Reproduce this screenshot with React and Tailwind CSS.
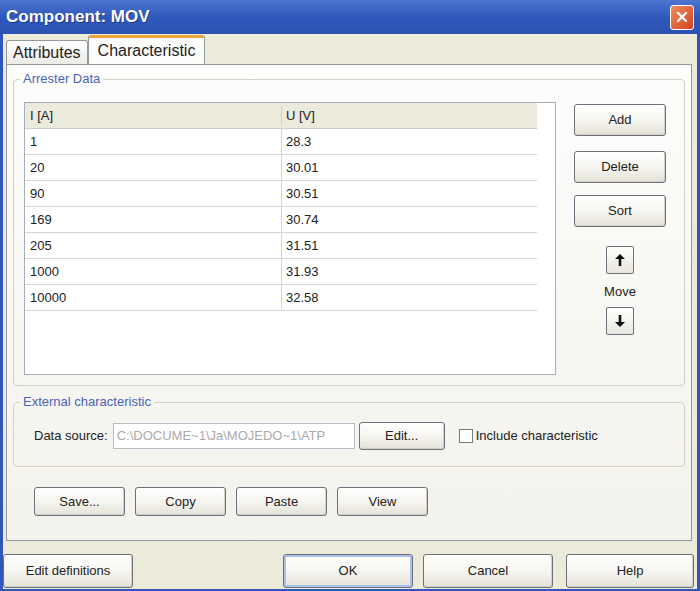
import React from "react";

const rows = [
  ["1", "28.3"],
  ["20", "30.01"],
  ["90", "30.51"],
  ["169", "30.74"],
  ["205", "31.51"],
  ["1000", "31.93"],
  ["10000", "32.58"],
];

function XpButton({ children, className = "", isDefault = false }) {
  return (
    <button
      className={
        "flex items-center justify-center rounded-[3px] border border-[#6b7079] bg-gradient-to-b from-white via-[#f6f5f0] to-[#e4e2d8] text-[13px] text-[#222] " +
        (isDefault ? "shadow-[inset_0_0_0_2px_#a9c1ec] " : "shadow-[inset_-1px_-1px_0_#d3d1c6] ") +
        className
      }
    >
      {children}
    </button>
  );
}

function ArrowButton({ up }) {
  return (
    <button className="flex h-[28px] w-[28px] items-center justify-center rounded-[2px] border border-[#6b7079] bg-gradient-to-b from-white to-[#e8e6dc]">
      <svg width="12" height="14" viewBox="0 0 12 14">
        {up ? (
          <path d="M6 1 L11 6 H7.3 V13 H4.7 V6 H1 Z" fill="#111" />
        ) : (
          <path d="M6 13 L11 8 H7.3 V1 H4.7 V8 H1 Z" fill="#111" />
        )}
      </svg>
    </button>
  );
}

function GroupBox({ label, className = "", legendClass = "", children }) {
  return (
    <fieldset className={"rounded-[4px] border border-[#d3d2c4] " + className}>
      <legend className={"px-[3px] text-[13px] leading-[16px] text-[#4a63b8] " + legendClass}>{label}</legend>
      {children}
    </fieldset>
  );
}

export default function App() {
  return (
    <div className="flex h-[591px] w-[700px] flex-col overflow-hidden bg-[#2f56b8] font-['Liberation_Sans',Arial,sans-serif]">
      {/* title bar */}
      <div className="flex h-[34px] items-center justify-between bg-gradient-to-b from-[#4d75d0] via-[#2f58bd] to-[#2c52b2] pl-[6px] pr-[6px]">
        <span className="text-[17px] font-bold text-white [text-shadow:1px_1px_0_#1d3a86]">Component: MOV</span>
        <div className="flex h-[25px] w-[24px] items-center justify-center rounded-[3px] border border-white bg-gradient-to-br from-[#f08a5c] to-[#d2401c]">
          <svg width="12" height="12" viewBox="0 0 12 12">
            <path d="M2 2 L10 10 M10 2 L2 10" stroke="#fff" strokeWidth="2.4" strokeLinecap="round" />
          </svg>
        </div>
      </div>

      {/* body */}
      <div className="mx-[3px] mb-[2px] flex flex-1 flex-col bg-[#ecead9]">
        {/* tabs */}
        <div className="flex h-[30px] items-end pl-[3px]">
          <div className="flex h-[24px] items-center rounded-t-[3px] border border-b-0 border-[#919b9c] bg-gradient-to-b from-white to-[#ecebe5] px-[6px] text-[16px] text-[#222]">
            Attributes
          </div>
          <div className="flex h-[29px] flex-col rounded-t-[3px] border-x border-[#919b9c] bg-[#fcfcfb]">
            <div className="h-[3px] rounded-t-[3px] bg-[#e8a33a]" />
            <div className="flex flex-1 items-center px-[9px] text-[16px] text-[#222]">Characteristic</div>
          </div>
        </div>

        {/* tab panel */}
        <div className="ml-[3px] mr-[5px] flex h-[477px] flex-col border border-[#919b9c] bg-gradient-to-b from-[#fdfdfc] to-[#f3f2ec] px-[6px]">
          <GroupBox label="Arrester Data" legendClass="-ml-[4px]" className="mt-[6px] h-[315px] px-[10px] pt-[15px]">
            <div className="flex">
              <div className="h-[273px] w-[532px] border border-[#a7adb7] bg-white">
                <div className="w-[512px]">
                  <div className="flex h-[26px] items-center border-b border-[#cfcfc4] bg-[#ebeadb] text-[13px] text-[#222]">
                    <div className="w-[257px] border-r border-[#cfcfc4] pl-[5px]">I [A]</div>
                    <div className="pl-[4px]">U [V]</div>
                  </div>
                  {rows.map(([i, u]) => (
                    <div key={i} className="flex h-[26px] items-center border-b border-[#d6d6ce] text-[13px] text-[#222]">
                      <div className="flex h-full w-[257px] items-center border-r border-[#d6d6ce] pl-[5px]">{i}</div>
                      <div className="pl-[4px]">{u}</div>
                    </div>
                  ))}
                </div>
              </div>
              <div className="ml-[18px] flex flex-col items-center pt-[2px]">
                <XpButton className="h-[32px] w-[92px]">Add</XpButton>
                <XpButton className="mt-[15px] h-[32px] w-[92px]">Delete</XpButton>
                <XpButton className="mt-[12px] h-[32px] w-[92px]">Sort</XpButton>
                <div className="mt-[19px]">
                  <ArrowButton up />
                </div>
                <div className="mb-[8px] mt-[10px] text-[13px] leading-[15px] text-[#222]">Move</div>
                <ArrowButton />
              </div>
            </div>
          </GroupBox>

          <GroupBox label="External characteristic" legendClass="-ml-[14px]" className="mt-[8px] h-[73px] px-[20px] pt-[12px]">
            <div className="flex items-center">
              <span className="text-[13px] text-[#222]">Data source:</span>
              <div className="ml-[5px] flex h-[26px] w-[242px] items-center overflow-hidden whitespace-nowrap border border-[#b9bdc4] bg-white px-[3px] text-[13px] text-[#aaa]">
                C:\DOCUME~1\Ja\MOJEDO~1\ATP
              </div>
              <XpButton className="ml-[4px] h-[28px] w-[86px]">Edit...</XpButton>
              <div className="ml-[14px] h-[14px] w-[14px] border border-[#7c7c7c] bg-white" />
              <span className="ml-[3px] text-[13px] text-[#222]">Include characteristic</span>
            </div>
          </GroupBox>

          <div className="ml-[21px] mt-[20px] flex gap-[10px]">
            <XpButton className="h-[29px] w-[91px]">Save...</XpButton>
            <XpButton className="h-[29px] w-[91px]">Copy</XpButton>
            <XpButton className="h-[29px] w-[91px]">Paste</XpButton>
            <XpButton className="h-[29px] w-[91px]">View</XpButton>
          </div>
        </div>

        {/* bottom buttons */}
        <div className="mt-[13px] flex">
          <XpButton className="h-[34px] w-[130px]">Edit definitions</XpButton>
          <XpButton isDefault className="ml-[150px] h-[34px] w-[130px]">OK</XpButton>
          <XpButton className="ml-[10px] h-[34px] w-[130px]">Cancel</XpButton>
          <XpButton className="ml-[13px] h-[34px] w-[128px]">Help</XpButton>
        </div>
      </div>
    </div>
  );
}
